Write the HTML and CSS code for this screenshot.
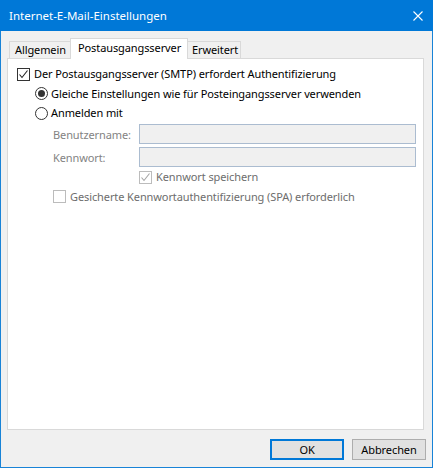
FILE: index.html
```html
<!DOCTYPE html>
<html lang="de">
<head>
<meta charset="utf-8">
<title>Internet-E-Mail-Einstellungen</title>
<link rel="stylesheet" href="styles.css">
</head>
<body>
<div class="window">
  <div class="titlebar">
    <span class="title">Internet-E-Mail-Einstellungen</span>
    <svg class="close" width="10" height="10" viewBox="0 0 10 10"><path d="M0.5 0.5 L9.5 9.5 M9.5 0.5 L0.5 9.5" stroke="#fff" stroke-width="1.1" fill="none"/></svg>
  </div>
  <div class="body">
    <div class="tabs">
      <div class="tab tab-first">Allgemein</div>
      <div class="tab tab-active">Postausgangsserver</div>
      <div class="tab tab-last">Erweitert</div>
    </div>
    <div class="panel">
      <div class="row r1">
        <span class="cb"><svg width="11" height="11" viewBox="0 0 11 11"><path d="M1.5 5.5 L4 8.5 L9.5 1.5" stroke="#222" stroke-width="1.1" fill="none"/></svg></span>
        <span class="lbl">Der Postausgangsserver (SMTP) erfordert Authentifizierung</span>
      </div>
      <div class="row r2 indent1">
        <span class="radio on"><span class="dot"></span></span>
        <span class="lbl rlbl">Gleiche Einstellungen wie für Posteingangsserver verwenden</span>
      </div>
      <div class="row r3 indent1">
        <span class="radio"></span>
        <span class="lbl rlbl">Anmelden mit</span>
      </div>
      <div class="row r4 indent2">
        <span class="flabel">Benutzername:</span>
        <span class="input"></span>
      </div>
      <div class="row r5 indent2">
        <span class="flabel">Kennwort:</span>
        <span class="input"></span>
      </div>
      <div class="row r6 indent3">
        <span class="cb dis"><svg width="11" height="11" viewBox="0 0 11 11"><path d="M1.5 5.5 L4 8.5 L9.5 1.5" stroke="#a5a5a5" stroke-width="1.1" fill="none"/></svg></span>
        <span class="lbl dlbl">Kennwort speichern</span>
      </div>
      <div class="row r7 indent2">
        <span class="cb dis"></span>
        <span class="lbl dlbl">Gesicherte Kennwortauthentifizierung (SPA) erforderlich</span>
      </div>
    </div>
    <div class="buttons">
      <button class="btn btn-default">OK</button>
      <button class="btn">Abbrechen</button>
    </div>
  </div>
</div>
</body>
</html>
```
FILE: styles.css
```css
* { box-sizing: border-box; }
html, body { margin: 0; padding: 0; }
body {
  width: 433px;
  height: 468px;
  font-family: "Noto Sans", "Open Sans", sans-serif;
  font-size: 11px;
  letter-spacing: -0.1px;
  color: #000;
  background: #f0f0f0;
}
.window {
  width: 433px;
  height: 468px;
  display: flex;
  flex-direction: column;
  border: 1px solid #1883d7;
  border-top: none;
  background: #f0f0f0;
}
.titlebar {
  height: 31px;
  margin: 0 -1px;
  background: #0078d7;
  display: flex;
  align-items: center;
  justify-content: space-between;
  padding: 0 10px 0 9px;
  color: #fff;
}
.title { font-size: 11.5px; line-height: 16px; letter-spacing: 0; }
.close { display: block; }
.body {
  flex: 1;
  display: flex;
  flex-direction: column;
  padding: 7px 8px 0 6px;
}
.tabs {
  display: flex;
  align-items: flex-end;
  height: 20px;
  padding-left: 2px;
  position: relative;
  z-index: 1;
}
.tab {
  height: 17px;
  border: 1px solid #d9d9d9;
  border-bottom: none;
  background: #f0f0f0;
  line-height: 16px;
  white-space: nowrap;
  overflow: hidden;
}
.tab-first { width: 62px; padding-left: 5px; }
.tab-active {
  height: 21px;
  margin-bottom: -1px;
  width: 118px;
  margin-left: -1px;
  background: #fff;
  padding-left: 7px;
  line-height: 17px;
}
.tab-last { width: 54px; margin-left: -1px; padding-left: 4px; }
.panel {
  height: 372px;
  border: 1px solid #d9d9d9;
  background: #fff;
  padding: 5px 0 0 9px;
  display: flex;
  flex-direction: column;
}
.row { display: flex; align-items: center; white-space: nowrap; }
.r1 { height: 20px; }
.r2 { height: 19px; }
.r3 { height: 20px; }
.r4 { height: 20px; margin-top: 1px; }
.r5 { height: 20px; margin-top: 3px; }
.r6 { height: 20px; }
.r7 { height: 19px; }
.indent1 { padding-left: 18px; }
.indent2 { padding-left: 36px; }
.indent3 { padding-left: 122px; }
.cb {
  width: 13px;
  height: 13px;
  border: 1px solid #333;
  background: #fff;
  display: flex;
  align-items: center;
  justify-content: center;
  flex: none;
}
.cb.dis { border-color: #bcbcbc; }
.lbl { margin-left: 4px; line-height: 14px; }
.rlbl { margin-left: 3px; }
.dlbl { color: #6d6d6d; }
.radio {
  width: 13px;
  height: 13px;
  border: 1px solid #333;
  border-radius: 50%;
  background: #fff;
  display: flex;
  align-items: center;
  justify-content: center;
  flex: none;
}
.dot { width: 7px; height: 7px; border-radius: 50%; background: #333; }
.flabel { width: 86px; color: #838383; }
.input {
  width: 277px;
  height: 20px;
  border: 1px solid #abbcd0;
  background: #f0f0f0;
}
.buttons {
  display: flex;
  justify-content: flex-end;
  gap: 8px;
  margin-top: 9px;
  margin-right: -2px;
}
.btn {
  width: 74px;
  height: 21px;
  font-family: inherit;
  font-size: 11px;
  letter-spacing: -0.1px;
  border: 1px solid #adadad;
  background: #e1e1e1;
  color: #000;
  padding: 0;
  margin: 0;
}
.btn-default { border: 2px solid #0078d7; }
```
